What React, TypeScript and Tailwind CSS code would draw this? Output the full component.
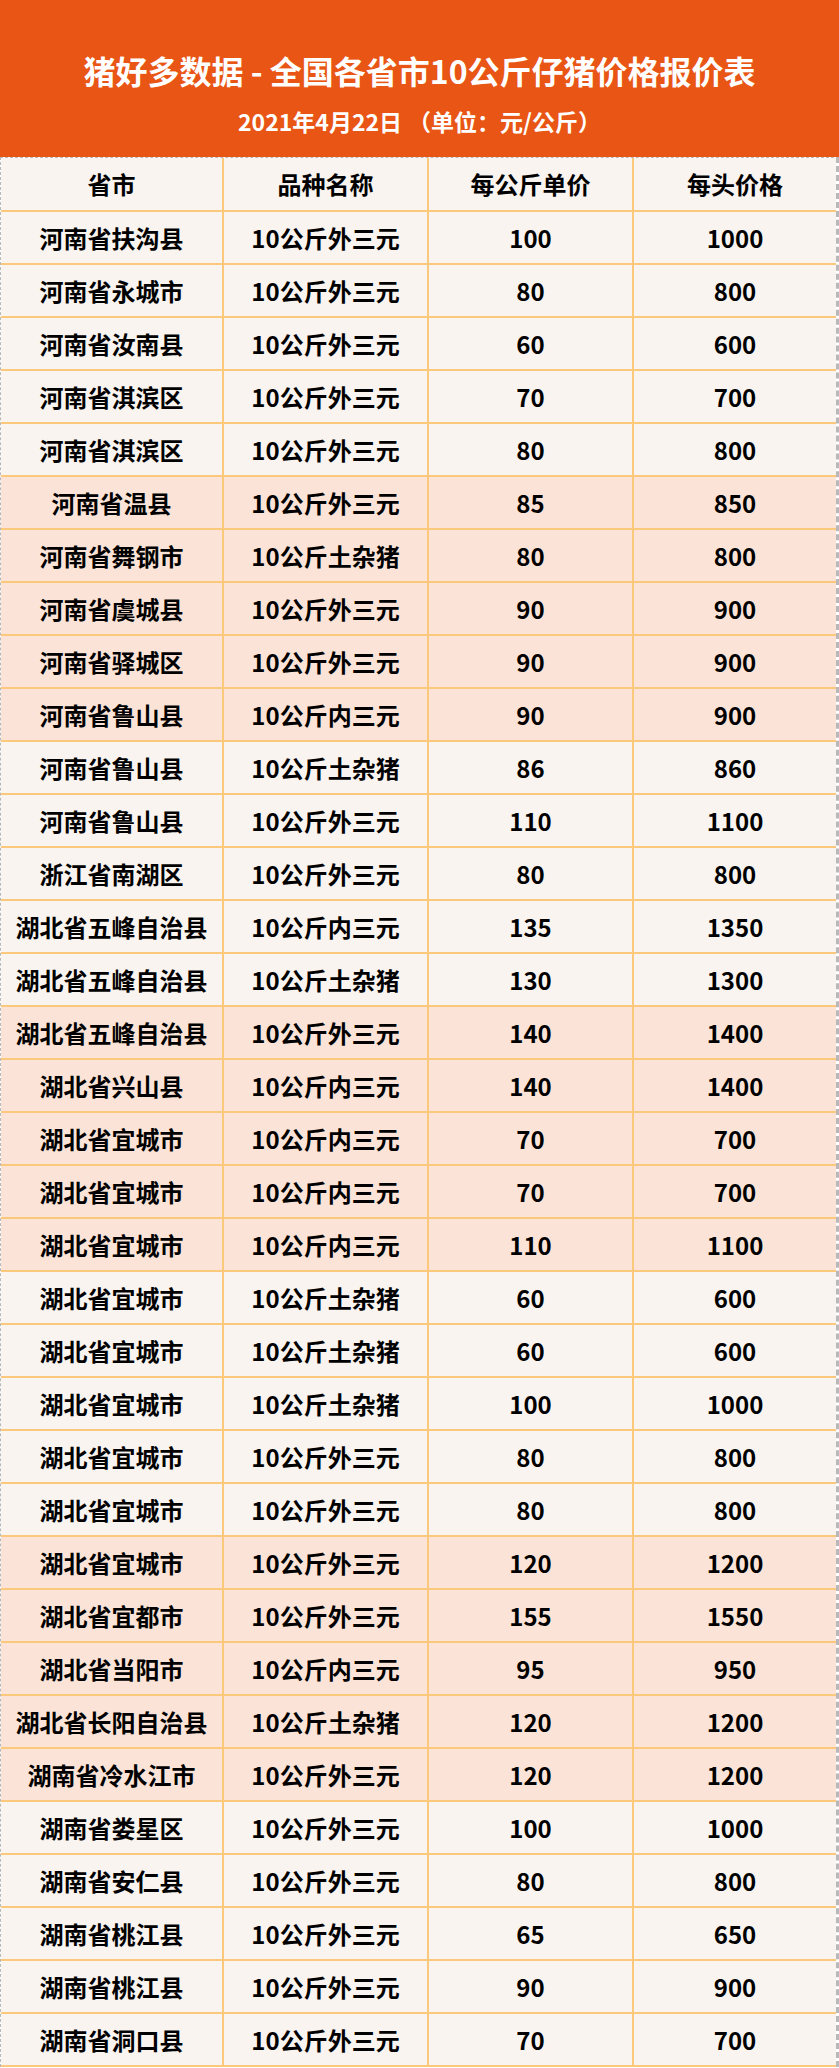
const rows: [string, string, string, string, boolean][] = [
  ["河南省扶沟县", "10公斤外三元", "100", "1000", false],
  ["河南省永城市", "10公斤外三元", "80", "800", false],
  ["河南省汝南县", "10公斤外三元", "60", "600", false],
  ["河南省淇滨区", "10公斤外三元", "70", "700", false],
  ["河南省淇滨区", "10公斤外三元", "80", "800", false],
  ["河南省温县", "10公斤外三元", "85", "850", true],
  ["河南省舞钢市", "10公斤土杂猪", "80", "800", true],
  ["河南省虞城县", "10公斤外三元", "90", "900", true],
  ["河南省驿城区", "10公斤外三元", "90", "900", true],
  ["河南省鲁山县", "10公斤内三元", "90", "900", true],
  ["河南省鲁山县", "10公斤土杂猪", "86", "860", false],
  ["河南省鲁山县", "10公斤外三元", "110", "1100", false],
  ["浙江省南湖区", "10公斤外三元", "80", "800", false],
  ["湖北省五峰自治县", "10公斤内三元", "135", "1350", false],
  ["湖北省五峰自治县", "10公斤土杂猪", "130", "1300", false],
  ["湖北省五峰自治县", "10公斤外三元", "140", "1400", true],
  ["湖北省兴山县", "10公斤内三元", "140", "1400", true],
  ["湖北省宜城市", "10公斤内三元", "70", "700", true],
  ["湖北省宜城市", "10公斤内三元", "70", "700", true],
  ["湖北省宜城市", "10公斤内三元", "110", "1100", true],
  ["湖北省宜城市", "10公斤土杂猪", "60", "600", false],
  ["湖北省宜城市", "10公斤土杂猪", "60", "600", false],
  ["湖北省宜城市", "10公斤土杂猪", "100", "1000", false],
  ["湖北省宜城市", "10公斤外三元", "80", "800", false],
  ["湖北省宜城市", "10公斤外三元", "80", "800", false],
  ["湖北省宜城市", "10公斤外三元", "120", "1200", true],
  ["湖北省宜都市", "10公斤外三元", "155", "1550", true],
  ["湖北省当阳市", "10公斤内三元", "95", "950", true],
  ["湖北省长阳自治县", "10公斤土杂猪", "120", "1200", true],
  ["湖南省冷水江市", "10公斤外三元", "120", "1200", true],
  ["湖南省娄星区", "10公斤外三元", "100", "1000", false],
  ["湖南省安仁县", "10公斤外三元", "80", "800", false],
  ["湖南省桃江县", "10公斤外三元", "65", "650", false],
  ["湖南省桃江县", "10公斤外三元", "90", "900", false],
  ["湖南省洞口县", "10公斤外三元", "70", "700", false],
];

function Row({ cells, hl, head }: { cells: string[]; hl?: boolean; head?: boolean }) {
  return (
    <div
      className={`grid grid-cols-[223px_205px_205px_1fr] border-b-2 border-[#fcc87c] ${
        head ? "h-[54px]" : "h-[53px]"
      } ${hl ? "bg-[#fbe4d7]" : "bg-[#f9f4f0]"}`}
    >
      {cells.map((c, i) => (
        <div
          key={i}
          className={`flex items-center justify-center ${i < 3 ? "border-r-2 border-[#fcc87c]" : ""}`}
        >
          {c}
        </div>
      ))}
    </div>
  );
}

export default function App() {
  return (
    <div
      className="w-[839px] bg-white text-black font-bold"
      style={{ fontFamily: '"Noto Sans CJK SC", "Noto Sans", sans-serif' }}
    >
      <div className="h-[157px] bg-[#e85515] text-white flex flex-col items-center">
        <div className="mt-[46px] text-[32px] leading-[48px]">猪好多数据 - 全国各省市10公斤仔猪价格报价表</div>
        <div className="mt-[12px] text-[23px] leading-[30px] flex">
          <span>2021年4月22日</span>
          <span className="ml-[6px]">（单位：元/公斤）</span>
        </div>
      </div>
      <div className="border-t border-dashed border-[#b8b8b8] border-l border-r-[3px] border-r-[#b8b8b8] border-l-[#b8b8b8] text-[24px]">
        <Row head cells={["省市", "品种名称", "每公斤单价", "每头价格"]} />
        {rows.map((r, i) => (
          <Row key={i} hl={r[4]} cells={[r[0], r[1], r[2], r[3]]} />
        ))}
      </div>
    </div>
  );
}
